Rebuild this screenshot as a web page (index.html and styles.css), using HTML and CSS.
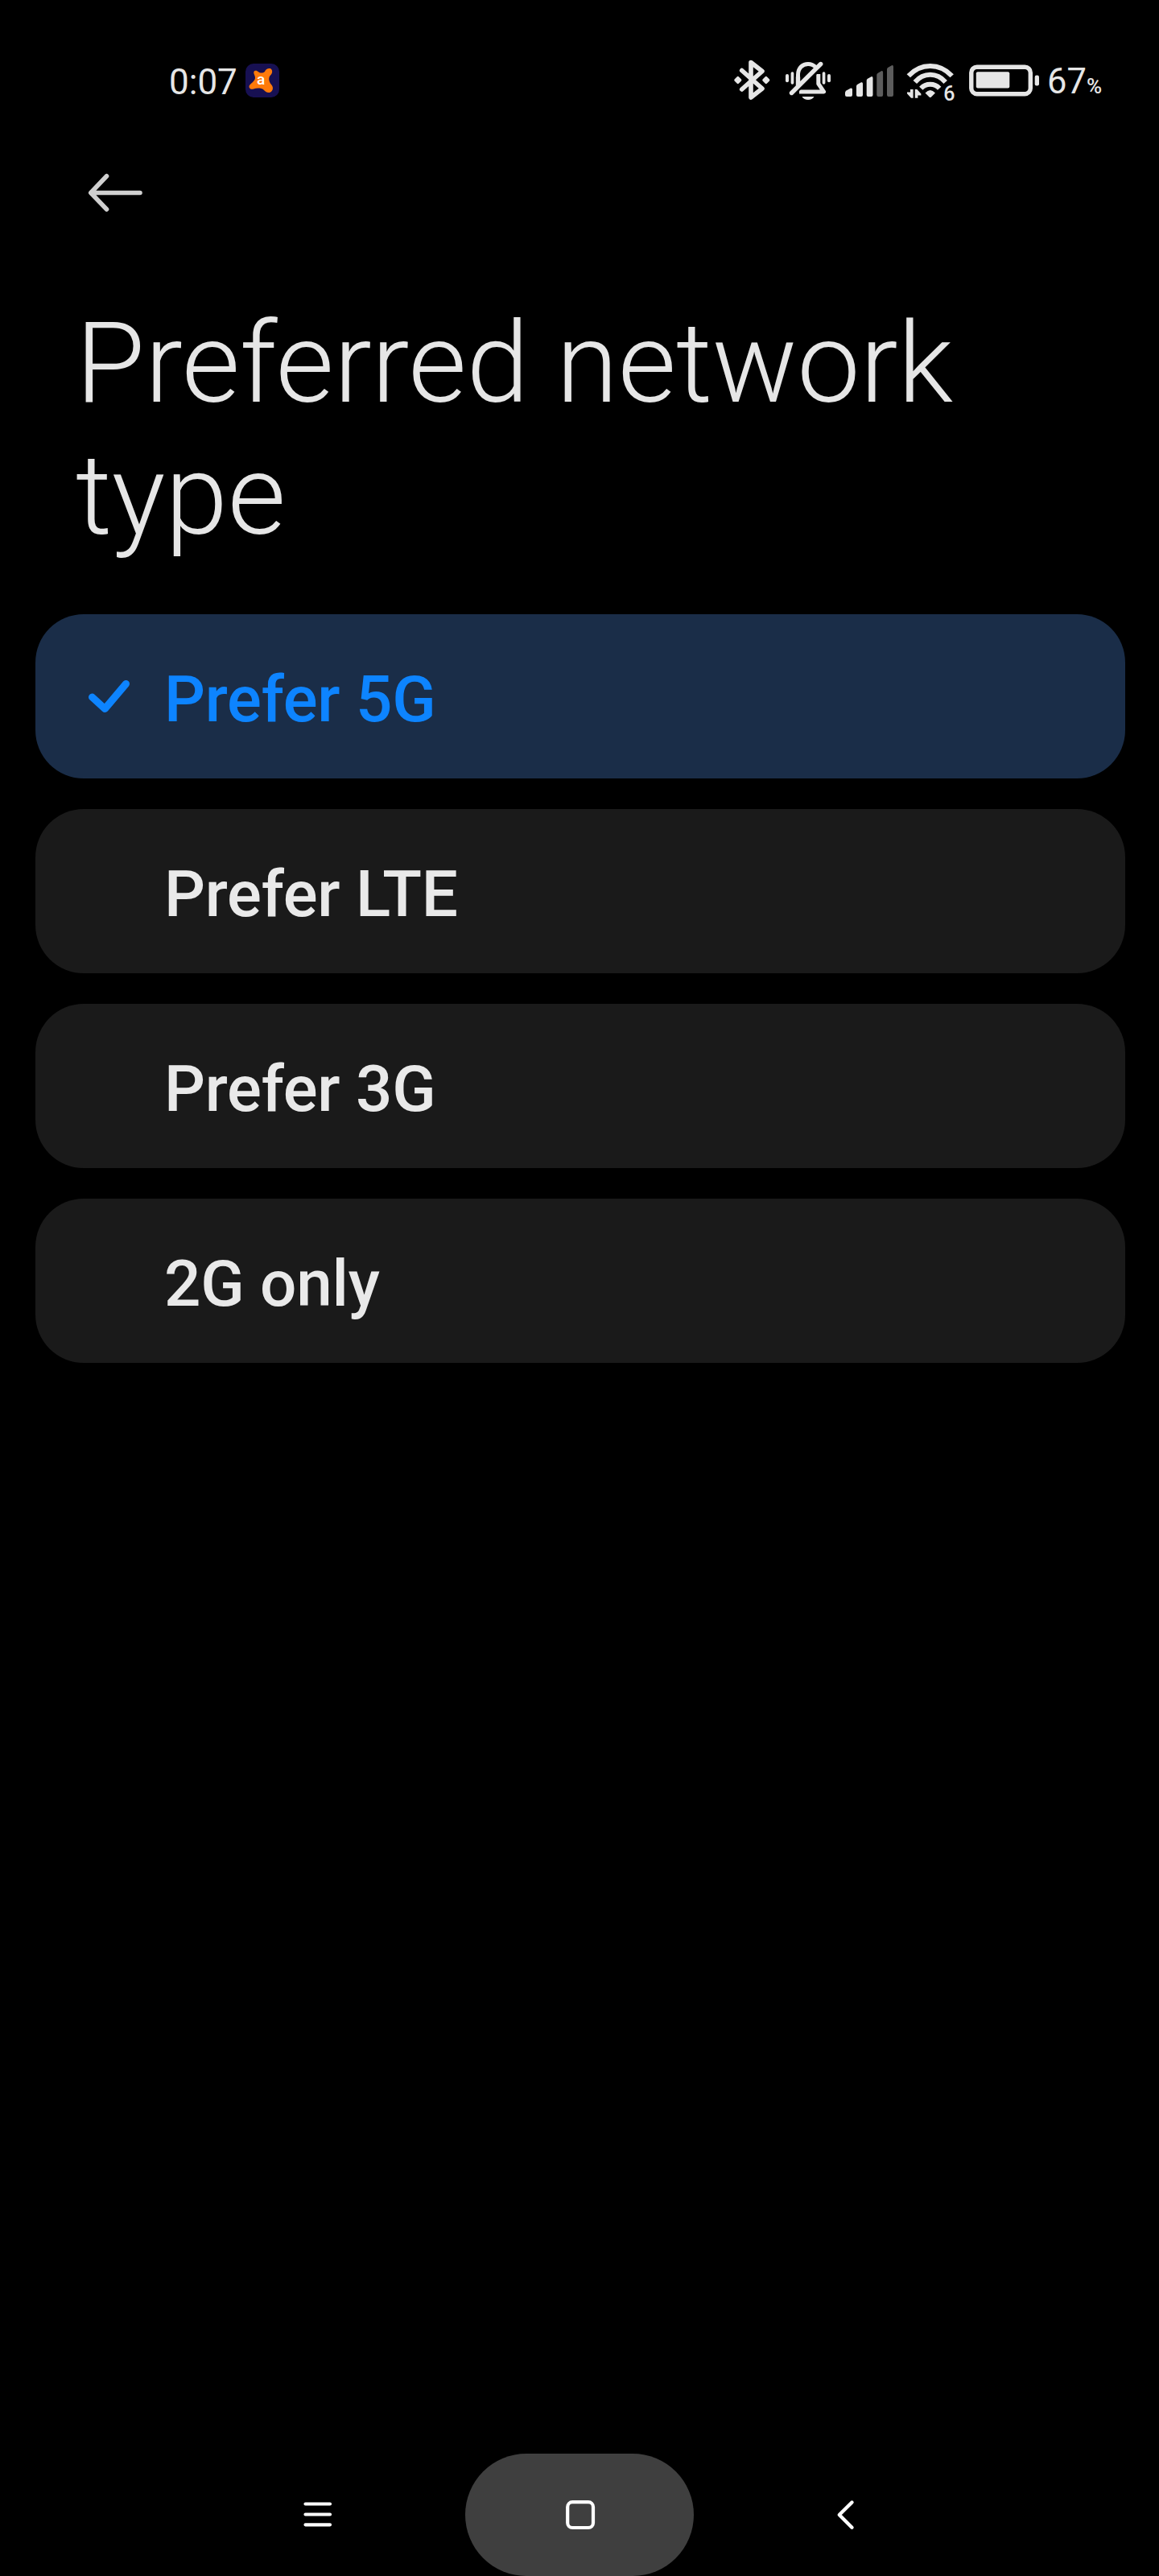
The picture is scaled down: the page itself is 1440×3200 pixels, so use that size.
FILE: index.html
```html
<!DOCTYPE html>
<html lang="en">
<head>
<meta charset="utf-8">
<title>Preferred network type</title>
<link rel="stylesheet" href="styles.css">
</head>
<body>
<div class="screen">
  <header class="status">
    <div class="status-left">
      <span class="clock">0:07</span>
      <svg class="app-badge" width="42" height="42" viewBox="0 0 42 42">
        <rect width="42" height="42" rx="10" fill="#171052"/>
        <path d="M10.500 10 C11.500 8 14.500 8.500 16 10.300 C18 12 21.500 12 24 10 C25 7 28 5.500 30.500 6 C34 7 34 12 31 14.500 C28.500 17 28.500 22 32 26 C35 29 34.500 33.500 31 35.500 C28 37 24.500 35 22.500 32.500 C20 30 14 30 10 31.500 C6 33 3.500 29.500 5 27 C7 24 11.500 22 12 18 C12.300 15 9.500 12.500 10.500 10Z" fill="#ff7a0a"/>
        <text class="badge-letter" x="19.200" y="25.800" text-anchor="middle">a</text>
      </svg>
    </div>
    <div class="status-right">
      <svg width="48" height="54" viewBox="911 73 48 54">
        <path d="M921.700 87.500 L947 110 L933 121 V77.500 L947 88.500 L921.700 111" fill="none" stroke="#e6e6e6" stroke-width="5.600" stroke-linecap="round" stroke-linejoin="round"/>
        <path d="M914 99.500 L916.800 96.700 L919.600 99.500 L916.800 102.300Z M949 99.500 L951.800 96.700 L954.600 99.500 L951.800 102.300Z" fill="#e6e6e6" stroke="#e6e6e6" stroke-width="3.500" stroke-linejoin="round"/>
      </svg>
      <svg class="bell" width="58" height="54" viewBox="975 73 58 54">
        <g fill="none" stroke="#e6e6e6" stroke-width="5">
          <path d="M991.500 108 V93 C991.500 84 997.500 79.500 1004 79.500 C1008 79.500 1011 81 1013.500 83.500"/>
          <path d="M1016.800 92 V104 L1023.500 114 H993" stroke-linejoin="round"/>
        </g>
        <path d="M1010 97 L1018 89 V86 H1010Z M988 118 L998 108 H988Z" fill="#000"/>
        <path d="M983.500 115.500 L1019.700 79.500 M991.500 107 V96" stroke="#e6e6e6" stroke-width="5.400" stroke-linecap="round"/>
        <path d="M996.500 120 H1011.500 C1009 125.300 999 125.300 996.500 120Z" fill="#e6e6e6"/>
        <g fill="#e6e6e6"><rect x="976" y="92" width="4" height="10.300" rx="2"/><rect x="982.600" y="89.300" width="3.700" height="15.500" rx="1.800"/><rect x="1021.700" y="89.300" width="3.700" height="15.500" rx="1.800"/><rect x="1028" y="92" width="4" height="10.300" rx="2"/></g>
      </svg>
      <svg class="signal" width="60" height="42" viewBox="1050 79 60 42">
        <g fill="#e6e6e6"><path d="M1050 115 Q1050 113.500 1051.500 112.500 L1057 109.500 Q1059 109 1059 111 V118 Q1059 120 1057 120 H1052 Q1050 120 1050 118Z"/><path d="M1064 107 Q1064 105.500 1065.500 104.700 L1070 102.300 Q1072 101.700 1072 104 V118 Q1072 120 1070 120 H1066 Q1064 120 1064 118Z"/><path d="M1076.700 100 Q1076.700 98.500 1078 97.700 L1082.500 95.200 Q1084.500 94.700 1084.500 97 V118 Q1084.500 120 1082.500 120 H1078.700 Q1076.700 120 1076.700 118Z"/></g>
        <g fill="#5c5c5c"><path d="M1089.300 93 Q1089.300 91.500 1090.800 90.700 L1095 88.200 Q1097.100 87.700 1097.100 90 V118 Q1097.100 120 1095.100 120 H1091.300 Q1089.300 120 1089.300 118Z"/><path d="M1102 86 Q1102 84.500 1103.500 83.700 L1108 81.200 Q1110 80.700 1110 83 V118 Q1110 120 1108 120 H1104 Q1102 120 1102 118Z"/></g>
      </svg>
      <svg class="wifi" width="62" height="64" viewBox="1125 68 62 64">
        <g fill="none" stroke="#e6e6e6" stroke-width="6"><path d="M1128.800 94.200 C1144 77.800 1167.500 77.800 1182.700 94.200"/><path d="M1136.800 102 C1147.500 89.800 1164 89.800 1174.700 102"/><path d="M1144.300 109.700 C1150.500 103 1161 103 1167.200 109.700"/></g>
        <path d="M1149.500 115.500 Q1155.700 108.500 1162 115.500 L1157 120.500 Q1155.700 121.500 1154.500 120.500Z" fill="#e6e6e6"/>
        <path d="M1131 111 h3.600 v10.800 h-2.600 l-5 -5.600 v-1.800 h4Z M1136.800 121.800 v-10.800 h2.600 l5 5.600 v1.800 h-4 v3.400Z" fill="#e6e6e6"/>
        <text class="wifi-gen" x="1172.300" y="124.500">6</text>
      </svg>
      <svg class="battery" width="88" height="40" viewBox="1204 79.500 88 40">
        <rect x="1206.800" y="82.700" width="73.500" height="33.500" rx="7" fill="none" stroke="#e6e6e6" stroke-width="5.400"/>
        <rect x="1212.800" y="88.800" width="41.500" height="20.300" rx="2" fill="#e6e6e6"/>
        <rect x="1285.700" y="93" width="5.300" height="13" rx="2.300" fill="#e6e6e6"/>
      </svg>
      <span class="charge">67<small class="percent">%</small></span>
    </div>
  </header>
  <div class="toolbar">
    <svg width="70" height="52" viewBox="108 214 70 52" fill="none" stroke="#d0d0d0" stroke-width="5.600" stroke-linecap="round" stroke-linejoin="round">
      <path d="M132.500 218.800 L112.800 239.500 L132.500 260 M113 239.500 H174"/>
    </svg>
  </div>
  <h1 class="title">Preferred network<br>type</h1>
  <ul class="options">
    <li class="option selected">
      <svg class="check" width="54" height="44" viewBox="108 843 54 44" fill="none" stroke="#0d84ff" stroke-width="9" stroke-linecap="round" stroke-linejoin="round"><path d="M114.500 866 L130.300 880.500 L156.500 849.500"/></svg>
      <span class="label">Prefer 5G</span>
    </li>
    <li class="option"><span class="label">Prefer LTE</span></li>
    <li class="option"><span class="label">Prefer 3G</span></li>
    <li class="option"><span class="label">2G only</span></li>
  </ul>
  <nav class="navbar">
    <span class="nav-key recents"><svg width="36" height="32" viewBox="377 3108 36 32" stroke="#fff" stroke-width="4.200" stroke-linecap="round"><path d="M379.500 3110.500 H410 M379.500 3123.500 H410 M379.500 3136.300 H410"/></svg></span>
    <span class="nav-key home"><svg width="40" height="40" viewBox="701 3104 40 40" fill="none"><rect x="705.200" y="3108.200" width="31.800" height="31.800" rx="6" stroke="#fff" stroke-width="4.200"/></svg></span>
    <span class="nav-key back"><svg width="24" height="38" viewBox="1039 3105 24 38" fill="none" stroke="#fff" stroke-width="4.400" stroke-linecap="round" stroke-linejoin="round"><path d="M1058.500 3108.500 L1042.800 3124 L1058.500 3139.700"/></svg></span>
  </nav>
</div>
</body>
</html>
```

FILE: styles.css
```css
* { box-sizing: border-box; }
body { margin: 0; background: #000; }
svg { display: block; flex: none; }

.screen {
  display: flex;
  flex-direction: column;
  width: 1440px;
  height: 3200px;
  background: #000;
  color: #e6e6e6;
  font-family: Roboto, sans-serif;
}

.status {
  display: flex;
  justify-content: space-between;
  align-items: center;
  height: 200px;
  padding: 0 71px 0 210px;
}
.status-left, .status-right { display: flex; align-items: center; }
.clock { width: 95px; padding-top: 3px; font-size: 44px; line-height: 50px; }
.badge-letter { font: 500 19px Roboto, sans-serif; fill: #fff; }
.bell { margin-left: 16px; }
.signal { margin-left: 17px; }
.wifi { margin-left: 15px; }
.wifi-gen { font: 500 25px Roboto, sans-serif; fill: #e6e6e6; }
.battery { margin-left: 17px; }
.charge { width: 68px; margin-left: 9px; padding-top: 3px; font-size: 43.5px; line-height: 50px; white-space: nowrap; }
.percent { font-size: 26px; font-weight: 500; line-height: 1; }

.toolbar { height: 169px; padding: 14px 108px 0; }

.title {
  margin: 0;
  padding-left: 94px;
  font-size: 140px;
  font-weight: 300;
  line-height: 164px;
  letter-spacing: -0.2px;
}

.options {
  display: flex;
  flex-direction: column;
  gap: 38px;
  margin: 66px 42px 0 44px;
  padding: 0;
  list-style: none;
}
.option {
  display: flex;
  align-items: center;
  height: 204px;
  padding-left: 160px;
  border-radius: 60px;
  background: #1a1a1a;
  color: #e9e9e9;
  font-size: 80px;
  font-weight: 500;
  line-height: 94px;
  letter-spacing: -0.25px;
}
.label { padding-top: 7px; }
.selected { padding-left: 64px; background: #1a2d48; color: #0d84ff; }
.check { margin-right: 42px; }

.navbar {
  display: grid;
  grid-template-columns: 284px 284px 284px;
  column-gap: 44px;
  justify-content: center;
  height: 152px;
  margin-top: auto;
}
.nav-key { display: flex; align-items: center; justify-content: center; }
.recents, .back { padding-left: 6px; }
.home { padding-left: 2px; border-radius: 76px; background: #3f3f3f; }
```
